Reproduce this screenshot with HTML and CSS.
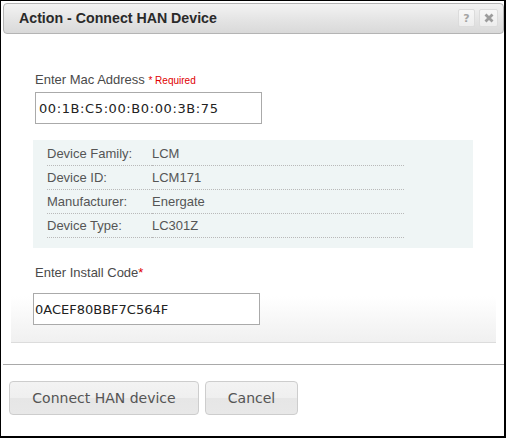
FILE: index.html
```html
<!DOCTYPE html>
<html>
<head>
<meta charset="utf-8">
<link rel="stylesheet" href="styles.css">
</head>
<body>
<div class="dialog">
  <div class="titlebar">
    <span class="title">Action - Connect HAN Device</span>
    <span class="tb-btn tb-help">?</span>
    <span class="tb-btn tb-close">
      <svg width="10" height="10" viewBox="0 0 10 10"><path d="M1.5 1.5 L8.5 8.5 M8.5 1.5 L1.5 8.5" stroke="#9c9c9c" stroke-width="2.8" stroke-linecap="butt"/></svg>
    </span>
  </div>
  <div class="form">
    <div class="label">Enter Mac Address <span class="req">* Required</span></div>
    <div class="field field-mac">00:1B:C5:00:B0:00:3B:75</div>
    <div class="panel">
      <table class="info">
        <tr><td class="k">Device Family:</td><td class="v">LCM</td></tr>
        <tr><td class="k">Device ID:</td><td class="v">LCM171</td></tr>
        <tr><td class="k">Manufacturer:</td><td class="v">Energate</td></tr>
        <tr><td class="k">Device Type:</td><td class="v">LC301Z</td></tr>
      </table>
    </div>
    <div class="label label-install">Enter Install Code<span class="star">*</span></div>
    <div class="field field-code">0ACEF80BBF7C564F</div>
  </div>
  <div class="sep"></div>
  <div class="actions">
    <button class="btn btn-connect">Connect HAN device</button>
    <button class="btn btn-cancel">Cancel</button>
  </div>
</div>
</body>
</html>
```
FILE: styles.css
```css
html, body {
  margin: 0;
  padding: 0;
  background: #fff;
}
.dialog {
  width: 506px;
  height: 438px;
  box-sizing: border-box;
  border: 1px solid #000;
  border-right-width: 2px;
  border-bottom-width: 2px;
  padding: 2px 0 0 2px;
  background: #fff;
  font-family: "Liberation Sans", Arial, sans-serif;
}
.titlebar {
  height: 31px;
  box-sizing: border-box;
  border: 1px solid #b4b4b4;
  border-radius: 4px;
  background: linear-gradient(to bottom, #f3f3f3 0%, #e4e4e4 55%, #d9d9d9 100%);
  display: flex;
  align-items: center;
  padding: 0 5px 0 15px;
}
.title {
  flex: 1;
  font-weight: bold;
  font-size: 14.2px;
  color: #2a2a2a;
  margin-top: -1px;
}
.tb-btn {
  width: 17px;
  height: 18px;
  box-sizing: border-box;
  border: 1px solid #dcdcdc;
  border-radius: 2px;
  background: linear-gradient(to bottom, #f7f7f7, #ededed);
  display: flex;
  align-items: center;
  justify-content: center;
  margin-top: -1px;
}
.tb-help {
  font-family: "DejaVu Sans", sans-serif;
  font-weight: bold;
  font-size: 11px;
  color: #a4a4a4;
  margin-right: 4px;
}
.tb-close {
  width: 19px;
}
.form {
  margin: 0 8px;
  padding: 38px 0 17px 24px;
  border-bottom: 1px solid #dcdcdc;
  background: linear-gradient(to bottom, #fff 0px, #fff 262px, #f0f0f0 100%);
}
.label {
  font-size: 13px;
  line-height: 15px;
  color: #4a4a4a;
}
.req {
  font-size: 10px;
  color: #e00000;
}
.star {
  color: #e00000;
}
.field {
  height: 32px;
  width: 227px;
  box-sizing: border-box;
  border: 1px solid #aaa;
  background: #fff;
  font-family: "DejaVu Sans", Verdana, sans-serif;
  font-size: 13px;
  color: #222;
  display: flex;
  align-items: center;
}
.field-mac {
  margin-top: 4px;
  padding-left: 3px;
  letter-spacing: 0.6px;
}
.panel {
  margin: 16px 0 0 -2px;
  width: 440px;
  box-sizing: border-box;
  padding: 2px 0 10px 14px;
  background: #eff5f5;
}
.info {
  border-collapse: collapse;
  border-spacing: 0;
  width: 357px;
}
.info td {
  padding: 4px 0 4px 0;
  height: 15px;
  line-height: 15px;
  font-size: 13px;
  color: #555;
  border-bottom: 1px dotted #b9b9b9;
}
.info td.k {
  width: 105px;
}
.label-install {
  margin-top: 17px;
}
.field-code {
  margin: 13px 0 0 -2px;
  padding-left: 1px;
}
.sep {
  margin-top: 21px;
  height: 1px;
  background: #a9a9a9;
}
.actions {
  margin: 16px 0 0 6px;
  display: flex;
  gap: 6px;
}
.btn {
  height: 34px;
  box-sizing: border-box;
  border: 1px solid #cdcdcd;
  border-radius: 4px;
  background: linear-gradient(to bottom, #f3f3f3 0%, #efefef 50%, #e6e6e6 51%, #e8e8e8 100%);
  font-family: "DejaVu Sans", Verdana, sans-serif;
  font-size: 14px;
  color: #555;
  padding: 0;
}
.btn-connect {
  width: 190px;
}
.btn-cancel {
  width: 93px;
}
```
